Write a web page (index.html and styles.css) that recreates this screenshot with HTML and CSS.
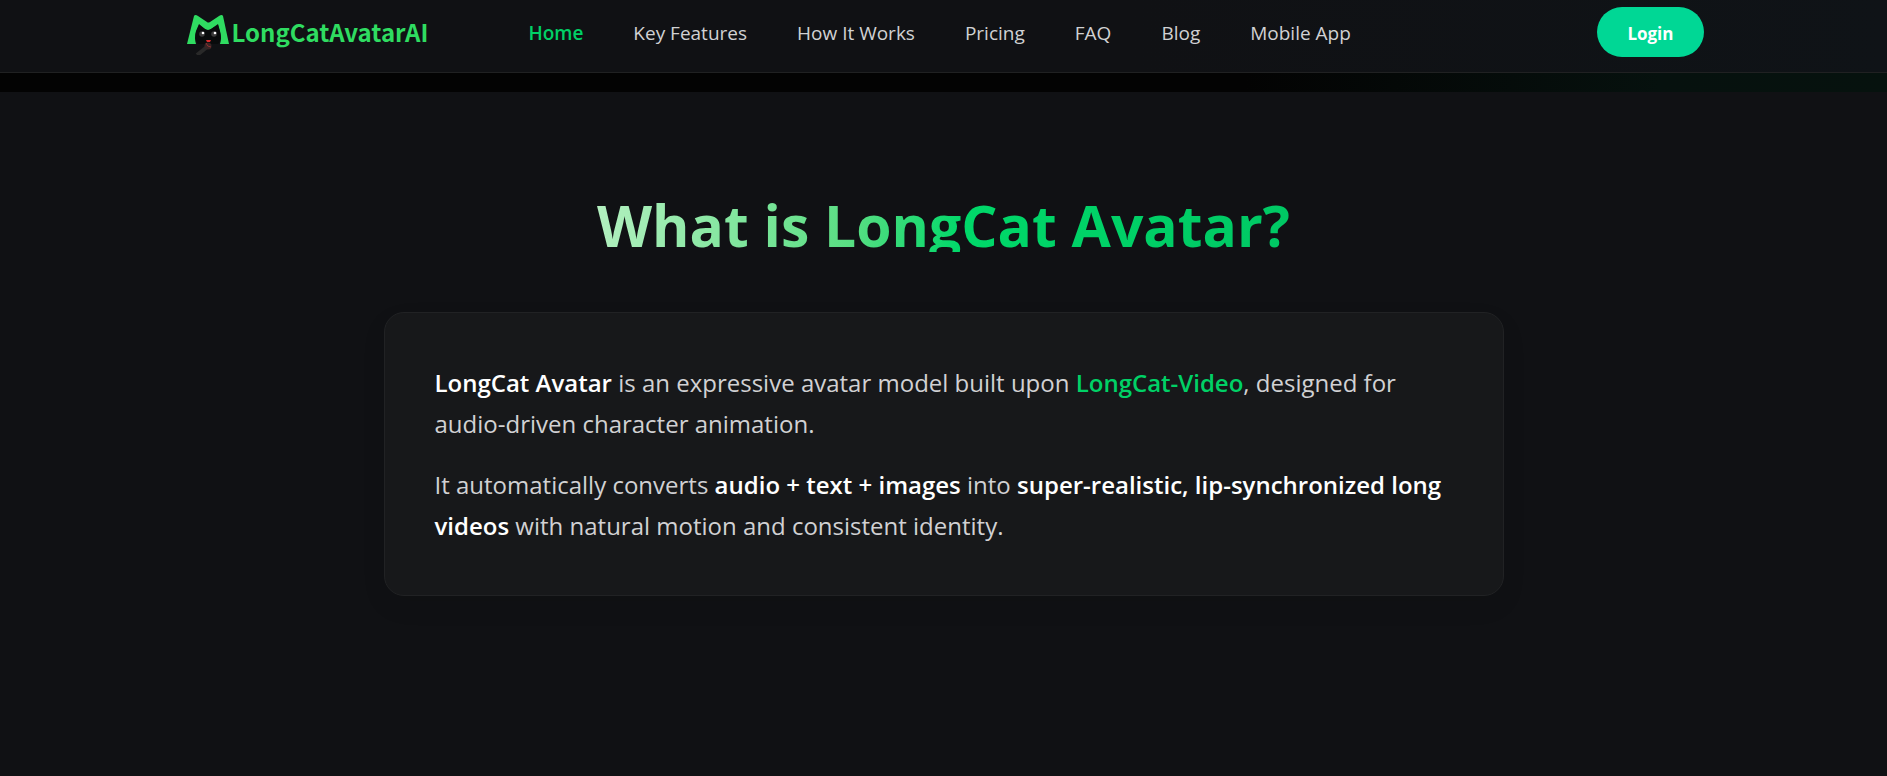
FILE: index.html
```html
<!DOCTYPE html>
<html lang="en">
<head>
  <meta charset="UTF-8" />
  <meta name="viewport" content="width=device-width, initial-scale=1.0"/>
  <title>LongCat Avatar AI</title>
  <link rel="stylesheet" href="styles.css">
</head>
<body>

  <!-- Header -->
  <header class="header">
    <div class="header-inner">
      <a class="logo" href="#">
        <svg class="logo-icon" viewBox="0 0 46 46" aria-hidden="true">
          <path fill="#2fdc61" d="M1 35 L8 7 Q9 5 12 7 L21 13 Q22 14 24 13 L33 7 Q36 5 37 7 L43 35 H34 Q36 29 34 22 L32 15 L25 20 Q22 22 19 20 L13 15 L10 22 Q8 29 10 35 Z"/>
          <path fill="#090b0c" d="M13 16 L19 20 Q22 22 25 20 L32 16 L34 23 Q36 31 32 35 H12 Q8 30 10 23 Z"/>
          <circle cx="16" cy="25" r="2.8" fill="#3a3a3a"/>
          <circle cx="28" cy="25" r="2.8" fill="#3a3a3a"/>
          <circle cx="17" cy="24" r="1.3" fill="#fff"/>
          <circle cx="29" cy="24" r="1.3" fill="#fff"/>
          <path fill="#d92c2c" d="M20 31 H25 L24 33 H21 Z"/>
          <path stroke="#292929" stroke-width="4" d="M11 46 L21 38"/>
          <circle cx="22" cy="37" r="3.5" fill="#382525"/>
          <path stroke="#8b3030" fill="none" d="M20 34 Q21 38 25 38"/>
        </svg>
        <span>LongCatAvatarAI</span>
      </a>
      <nav class="nav">
        <a class="active" href="#">Home</a>
        <a href="#features">Key Features</a>
        <a href="#how">How It Works</a>
        <a href="#pricing">Pricing</a>
        <a href="#faq">FAQ</a>
        <a href="#blog">Blog</a>
        <a href="#app">Mobile App</a>
      </nav>
      <button type="button" class="btn-login">Login</button>
    </div>
  </header>

  <div class="hero-edge"></div>

  <!-- What is -->
  <main class="about">
    <h1>What is LongCat Avatar?</h1>
    <div class="card">
      <p><strong>LongCat Avatar</strong> is an expressive avatar model built upon <a href="#video">LongCat-Video</a>, designed for audio-driven character animation.</p>
      <p>It automatically converts <strong>audio + text + images</strong> into <strong>super-realistic, lip-synchronized long videos</strong> with natural motion and consistent identity.</p>
    </div>
  </main>

</body>
</html>
```
FILE: styles.css
```css
* { box-sizing: border-box; }
body {
  margin: 0;
  min-height: 100vh;
  font-family: 'Segoe UI', 'Open Sans', 'Noto Sans', sans-serif;
  background: #101114;
  color: #d1d1d3;
}
a { text-decoration: none; }

.header {
  background: linear-gradient(90deg, #101114 60%, #0f1317);
  border-bottom: 1px solid #202122;
  padding: 7px 20px 15px;
}
.header-inner {
  display: flex;
  align-items: center;
  max-width: 1520px;
  margin: 0 auto;
}
.logo {
  display: flex;
  align-items: center;
  padding-left: 2px;
  color: #2fdc61;
  font-family: 'Noto Sans CJK SC', sans-serif;
  font-size: 24px;
  font-weight: 700;
  line-height: 50px;
}
.logo-icon {
  width: 46px;
  height: 46px;
}
.nav {
  display: flex;
  gap: 50px;
  margin-left: 100px;
  padding-top: 2px;
  font-size: 19px;
  line-height: 30px;
  white-space: nowrap;
}
.nav a { color: #d1d1d3; }
.nav .active {
  color: #00d166;
  font-weight: 600;
}
.btn-login {
  margin-left: auto;
  padding: 2px 30px 0;
  height: 50px;
  border: none;
  border-radius: 25px;
  background: #00d795;
  color: white;
  font-family: inherit;
  font-size: 17px;
  font-weight: 700;
  cursor: pointer;
}

.hero-edge {
  height: 19px;
  background: linear-gradient(90deg, #030303 66%, #06110e 88%, #06120e);
}

.about {
  max-width: 1160px;
  margin: 0 auto;
  padding: 100px 20px;
}
/* background is clipped to the text and the box, so the descender gets trimmed */
.about h1 {
  width: fit-content;
  height: 60px;
  margin: 0 auto 60px;
  font-size: 57px;
  font-weight: 700;
  line-height: 66px;
  background: linear-gradient(100deg, #b4f0c0, #59de83 37%, #00d869 53%, #00c864);
  -webkit-background-clip: text;
  background-clip: text;
  color: transparent;
}
.card {
  display: flex;
  flex-direction: column;
  gap: 20px;
  padding: 49px 50px;
  border: 1px solid #212224;
  border-radius: 20px;
  background: #17181a;
  box-shadow: 0 10px 25px rgba(0, 0, 0, 0.08);
  font-size: 24px;
  line-height: 41px;
}
.card p { margin: 0; }
.card strong {
  color: white;
  font-weight: 600;
}
.card a {
  color: #00d166;
  font-weight: 600;
}
```
